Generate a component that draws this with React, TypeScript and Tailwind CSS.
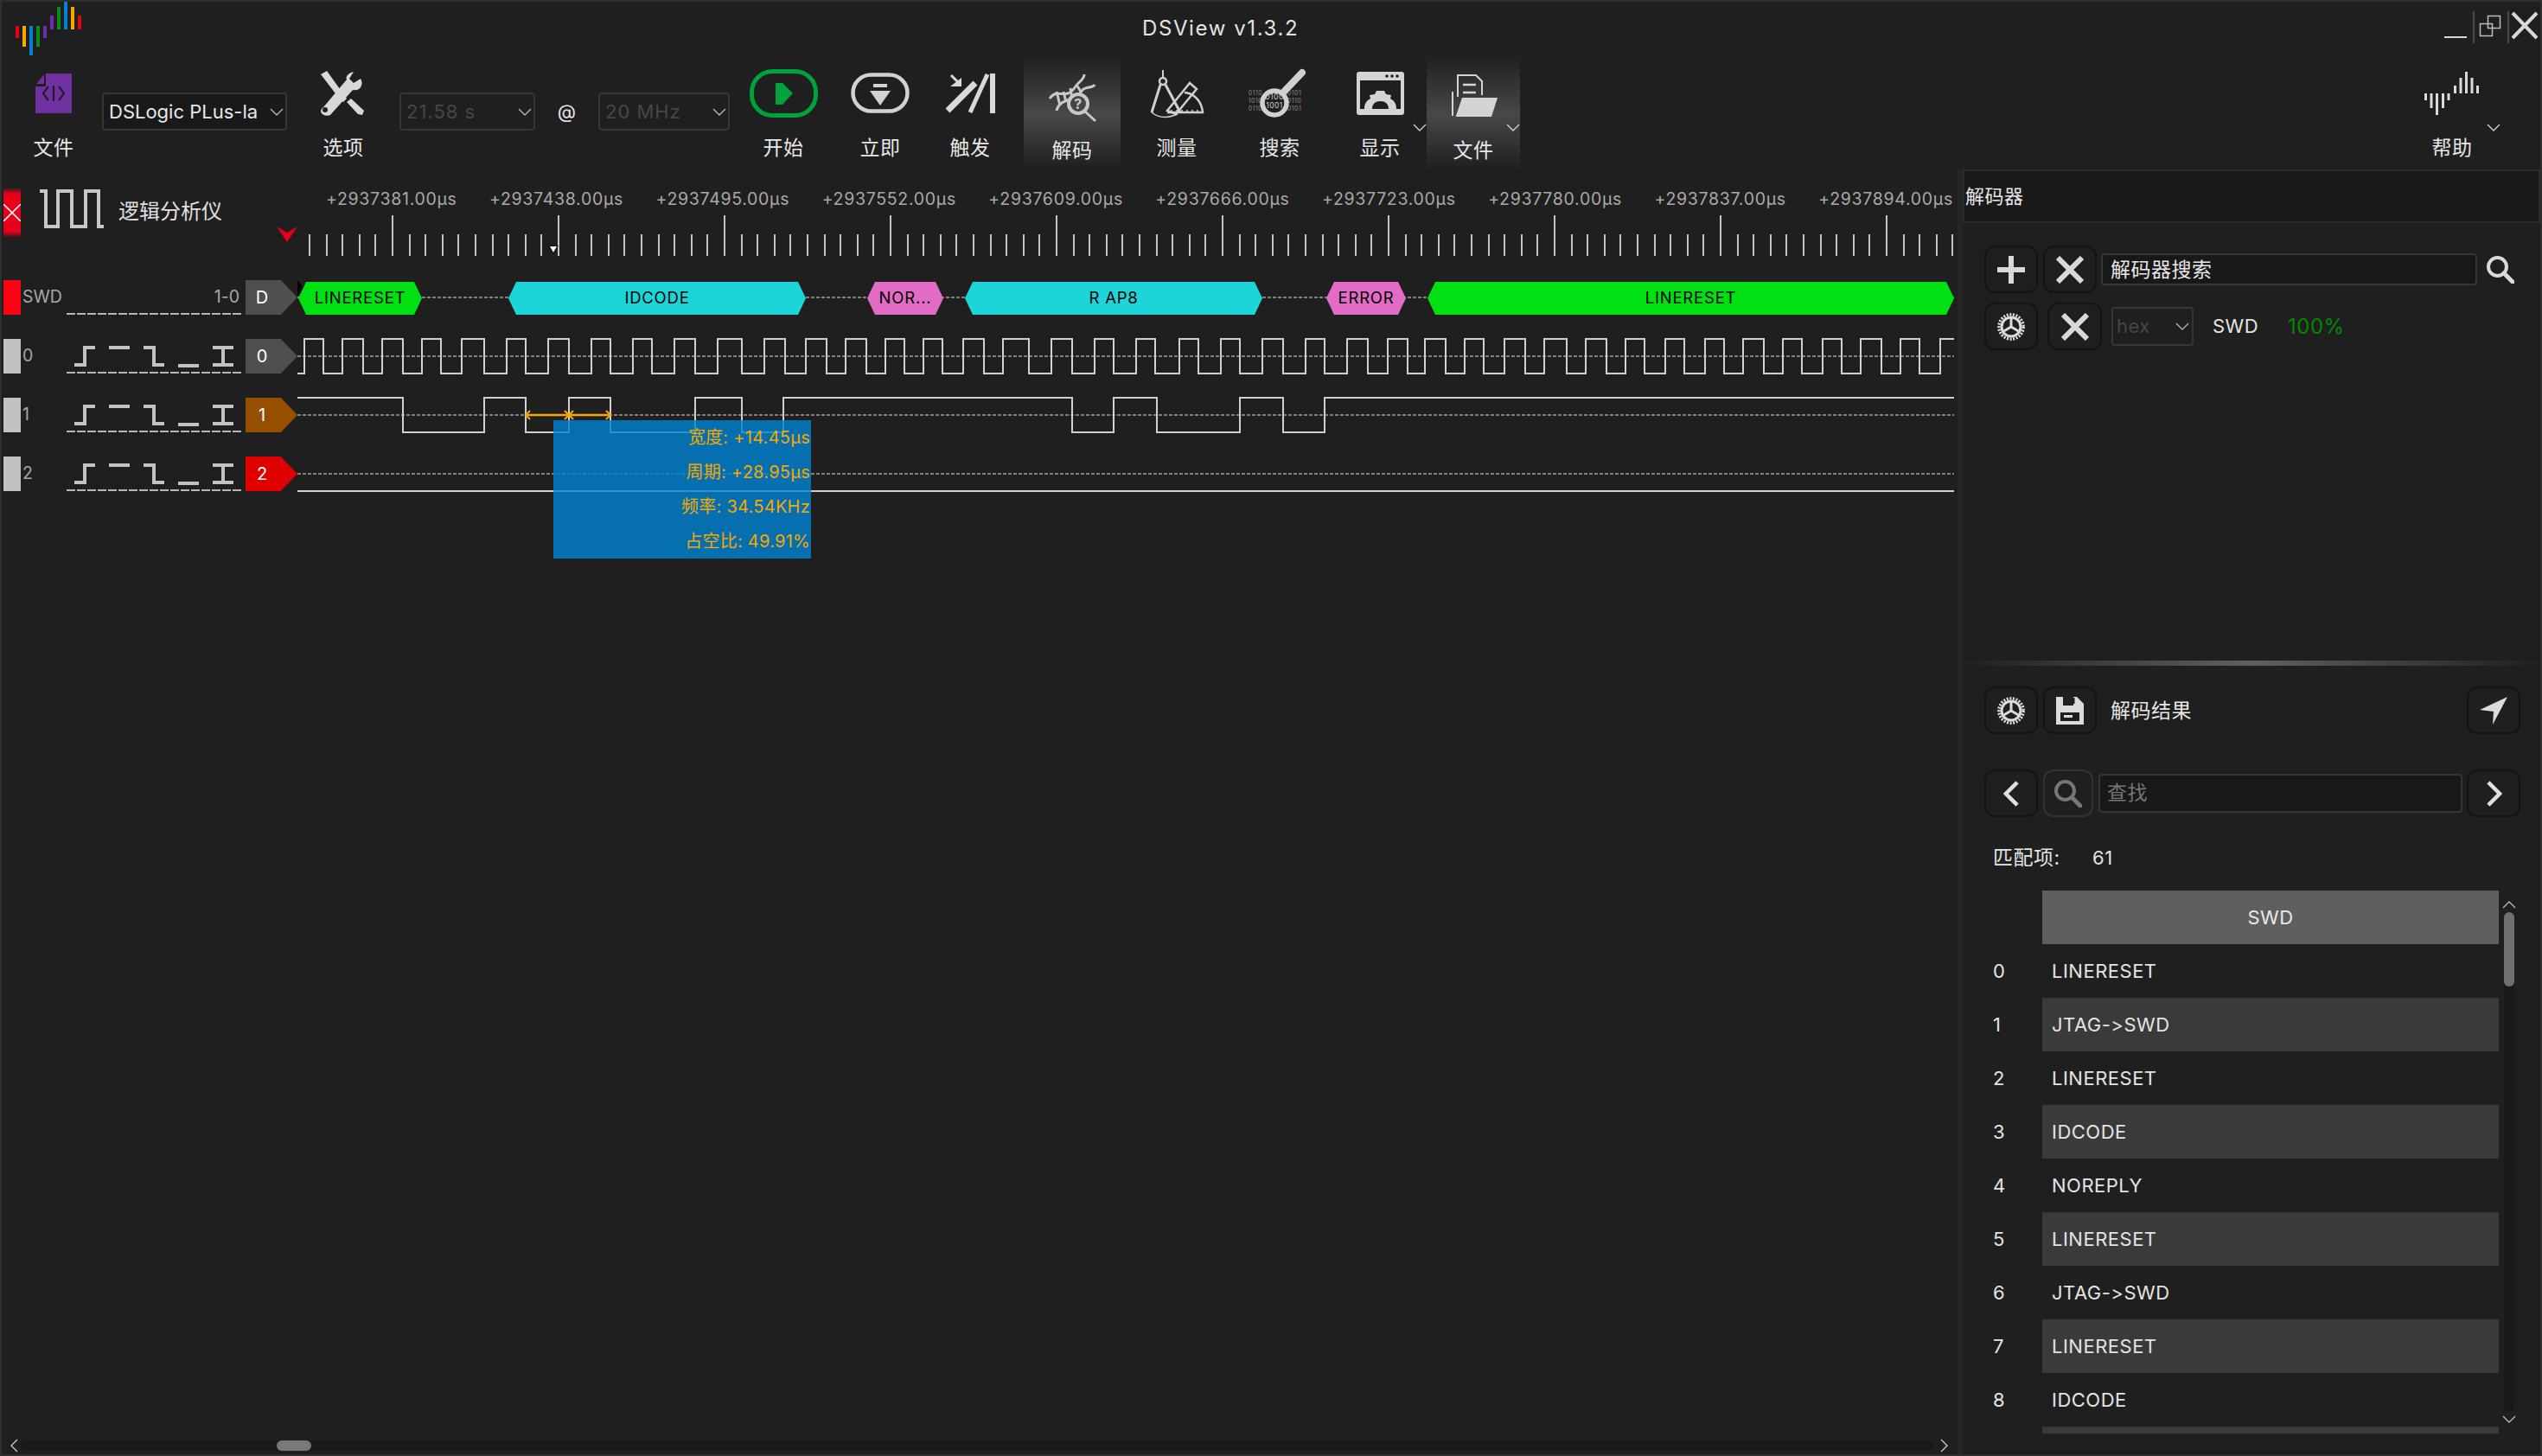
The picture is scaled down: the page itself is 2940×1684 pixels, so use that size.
import React from 'react'

const UI_FONT = "font-['Inter','Noto_Sans_CJK_SC',sans-serif]"

// clock edges in page px, starts low
const CLOCK = [352, 374, 396, 420, 442, 466, 488, 510, 534, 560, 586, 608, 634, 658, 684, 706, 732, 754, 780, 804, 830, 858, 884, 908, 932, 956, 978, 1002, 1024, 1046, 1068, 1090, 1114, 1138, 1160, 1190, 1216, 1240, 1266, 1288, 1314, 1336, 1364, 1386, 1412, 1434, 1460, 1484, 1510, 1532, 1558, 1582, 1605, 1628, 1648, 1672, 1694, 1716, 1740, 1764, 1786, 1812, 1834, 1858, 1880, 1902, 1926, 1948, 1972, 1994, 2016, 2040, 2062, 2084, 2108, 2130, 2152, 2176, 2198, 2220, 2244]
// data line, starts high
const DATA1 = [466, 560, 608, 658, 706, 804, 858, 906, 1240, 1288, 1338, 1434, 1484, 1532]

const SEGMENTS = [
    { x0: 345, x1: 488, label: 'LINERESET', color: 'bg-[#00e012]' },
    { x0: 588, x1: 932, label: 'IDCODE', color: 'bg-[#1dd5d9]' },
    { x0: 1003, x1: 1091, label: 'NOR...', color: 'bg-[#e26bc5]' },
    { x0: 1116, x1: 1460, label: 'R AP8', color: 'bg-[#1dd5d9]' },
    { x0: 1534, x1: 1626, label: 'ERROR', color: 'bg-[#e26bc5]' },
    { x0: 1651, x1: 2260, label: 'LINERESET', color: 'bg-[#00e012]' },
]

const RULER = ['+2937381.00µs', '+2937438.00µs', '+2937495.00µs', '+2937552.00µs', '+2937609.00µs', '+2937666.00µs', '+2937723.00µs', '+2937780.00µs', '+2937837.00µs', '+2937894.00µs']

const RESULTS = ['LINERESET', 'JTAG->SWD', 'LINERESET', 'IDCODE', 'NOREPLY', 'LINERESET', 'JTAG->SWD', 'LINERESET', 'IDCODE']

function wavePath(edges: number[], startHigh: boolean) {
    let high = startHigh
    let d = `M344 ${high ? 0 : 40}`
    for (const x of edges) {
        d += ` H${x} V${high ? 40 : 0}`
        high = !high
    }
    return d + ' H2260'
}

function Chev({ dir = 'down', className = '' }: { dir?: 'down' | 'up' | 'left' | 'right'; className?: string }) {
    const pts = { down: '1,1 8,8 15,1', up: '1,8 8,1 15,8', left: '8,1 1,8 8,15', right: '1,1 8,8 1,15' }[dir]
    const box = dir === 'down' || dir === 'up' ? '0 0 16 9' : '0 0 9 16'
    return (
        <svg viewBox={box} className={className} fill="none" stroke="currentColor" strokeWidth="1.4">
            <polyline points={pts} />
        </svg>
    )
}

function SearchGlyph({ className = '' }: { className?: string }) {
    return (
        <svg viewBox="0 0 32 32" className={className} fill="none" stroke="currentColor">
            <circle cx="12.5" cy="12.5" r="10.5" strokeWidth="4" />
            <line x1="20" y1="20" x2="30" y2="30" strokeWidth="5" strokeLinecap="round" />
        </svg>
    )
}

function Gear() {
    return (
        <svg viewBox="0 0 32 32" className="w-[32px] h-[32px]" fill="none" stroke="#dcdcdc">
            <circle cx="16" cy="16" r="14.2" strokeWidth="3.4" strokeDasharray="2 1.6" />
            <circle cx="16" cy="16" r="11" strokeWidth="3" />
            <path d="M16 16V6M16 16L24.5 21M16 16L7.5 21" strokeWidth="3" />
        </svg>
    )
}

function CrossGlyph() {
    return (
        <svg viewBox="0 0 32 32" className="w-[32px] h-[32px]" stroke="#d8d8d8" strokeWidth="6">
            <path d="M2 2L30 30M30 2L2 30" />
        </svg>
    )
}

function IconButton({ children, width = 'w-[62px]', border = 'border-[#141414]' }: { children: React.ReactNode; width?: string; border?: string }) {
    return <div className={`${width} h-[55px] shrink-0 flex items-center justify-center rounded-[12px] border-2 ${border}`}>{children}</div>
}

function ToolButton({ label, width, icon, active, chevron, className = '' }: { label: string; width: string; icon: React.ReactNode; active?: boolean; chevron?: string; className?: string }) {
    return (
        <div className={`relative ${width} h-full shrink-0 flex flex-col items-center pt-[16px] ${active ? 'bg-[linear-gradient(180deg,#1f1f1f,#484848_52%,#1f1f1f)]' : ''} ${className}`}>
            <div className="h-[60px]">{icon}</div>
            <div className={`${active ? 'mt-[18px]' : 'mt-[15px]'} h-[32px] text-[23px] leading-[32px] text-[#e8e8e8]`}>{label}</div>
            {chevron && <Chev className={`absolute ${chevron} top-[79px] w-[16px] h-[9px] text-[#d0d0d0]`} />}
        </div>
    )
}

function Dropdown({ text, width, dim, className = '' }: { text: string; width: string; dim?: boolean; className?: string }) {
    return (
        <div className={`${width} h-[44px] mt-[43px] shrink-0 flex items-center justify-between pl-[6px] pr-[2px] rounded-[4px] border-2 border-[#363636] overflow-hidden ${dim ? '' : 'bg-[#191919]'} ${className}`}>
            <span className={`text-[22px] whitespace-nowrap ${dim ? 'text-[#474747] tracking-[1px]' : 'text-[#e8e8e8] tracking-normal'}`}>{text}</span>
            <Chev className="w-[16px] h-[9px] shrink-0 text-[#b8b8b8]" />
        </div>
    )
}

function EdgeGlyphs() {
    return (
        <svg viewBox="86 0 184 40" className="w-[184px] h-[40px] shrink-0" fill="none" stroke="#c2c2c2" strokeWidth="4">
            <path d="M86 30H98V10H110" />
            <path d="M126 10H150" />
            <path d="M166 10H178V30H190" />
            <path d="M206 31H230" />
            <path d="M246 10H270M258 10V30M246 30H270" />
        </svg>
    )
}

function Flag({ text, color }: { text: string; color: string }) {
    return (
        <div className={`w-[60px] h-[40px] ml-[5px] shrink-0 flex items-center text-[20px] tracking-normal text-white [clip-path:polygon(0_0,68%_0,100%_50%,68%_100%,0_100%)] ${color}`}>
            <span className="w-[38px] text-center">{text}</span>
        </div>
    )
}

function ChannelRow({ box, name, flag, flagColor, glyphs, right, children }: { box: string; name: string; flag: string; flagColor: string; glyphs?: boolean; right?: string; children: React.ReactNode }) {
    return (
        <div className="flex h-[40px]">
            <div className={`w-[20px] ml-[2px] shrink-0 ${box}`} />
            <div className="relative w-[255px] shrink-0 flex items-center pl-[2px] text-[19.500px] tracking-normal text-[#a8a8a8]">
                <span className="w-[60px]">{name}</span>
                {glyphs && <EdgeGlyphs />}
                {right && <span className="ml-auto pr-[2px]">{right}</span>}
                <div className="absolute left-[53px] right-0 bottom-0 h-[2px] bg-[repeating-linear-gradient(90deg,#b8b8b8_0,#b8b8b8_10px,transparent_10px,transparent_12px)]" />
            </div>
            <Flag text={flag} color={flagColor} />
            <div className="relative w-[1916px] shrink-0">{children}</div>
        </div>
    )
}

function MidLine() {
    return (
        <svg viewBox="344 0 1916 40" className="absolute inset-0 w-[1916px] h-[40px] overflow-visible" fill="none">
            <line x1="344" y1="20" x2="2260" y2="20" stroke="#808080" strokeWidth="2" strokeDasharray="4 2" />
        </svg>
    )
}

function Wave({ d, children }: { d: string; children?: React.ReactNode }) {
    return (
        <svg viewBox="344 0 1916 40" className="absolute inset-0 w-[1916px] h-[40px] overflow-visible" fill="none">
            <path d={d} stroke="#d0d0d0" strokeWidth="2" />
            {children}
        </svg>
    )
}

function Ticks() {
    const ticks = Array.from({ length: 100 }, (_, k) => ({ x: Math.round((358 + 19.2 * k) / 2) * 2, major: k % 10 === 5 }))
    return (
        <svg viewBox="344 249 1916 47" className="w-[1916px] h-[47px] shrink-0 overflow-visible">
            {ticks.map(t => (
                <rect key={t.x} x={t.x - 1} y={t.major ? 249 : 271} width="2" height={t.major ? 47 : 25} fill="#c4c4c4" />
            ))}
            <path d="M634 284H646L640 294Z" fill="#111" />
            <path d="M636 285H644L640 292Z" fill="#fff" />
        </svg>
    )
}

function TitleBar() {
    const bars = [
        [18, 30, 14, '#e60012'], [26, 30, 24, '#f7a800'], [34, 30, 34, '#0086d1'], [42, 30, 24, '#0a8a20'], [50, 30, 14, '#6f2da8'],
        [58, 18, 16, '#6f2da8'], [66, 8, 26, '#0a8a20'], [74, 0, 34, '#0086d1'], [82, 8, 26, '#f7a800'], [90, 18, 16, '#e60012'],
    ] as const
    return (
        <div className="flex h-[62px] shrink-0">
            <svg viewBox="16 0 80 64" className="w-[80px] h-[64px] -mt-[2px] ml-[14px] shrink-0">
                {bars.map(([x, y, h, c]) => <rect key={x} x={x} y={y} width="4" height={h} fill={c} />)}
            </svg>
            <div className="ml-[1225px] h-[62px] flex items-center text-[24px] text-[#e4e4e4] tracking-[1.600px] whitespace-nowrap">DSView v1.3.2</div>
            <svg viewBox="2820 0 118 64" className="ml-auto w-[118px] h-[64px] -mt-[2px] shrink-0" fill="none" stroke="#d8d8d8">
                <line x1="2827" y1="43" x2="2853" y2="43" strokeWidth="2" />
                <line x1="2861" y1="13" x2="2861" y2="50" stroke="#4a4a4a" strokeWidth="2" />
                <rect x="2877.5" y="18.5" width="14" height="14" stroke="#bbb" strokeWidth="1.5" />
                <rect x="2868.5" y="27.5" width="14" height="14" stroke="#bbb" strokeWidth="1.5" />
                <line x1="2901" y1="13" x2="2901" y2="50" stroke="#4a4a4a" strokeWidth="2" />
                <path d="M2906 15L2934 44M2934 15L2906 44" strokeWidth="4" />
            </svg>
        </div>
    )
}

function Toolbar() {
    return (
        <div className="flex h-[132px] shrink-0">
            <ToolButton label="文件" width="w-[112px]" className="ml-[4px]" icon={
                <svg viewBox="6 80 112 60" className="w-[112px] h-[60px] overflow-visible" fill="none">
                    <path d="M53 85H83V131H41V100H53Z" fill="#7030a0" />
                    <path d="M42 97L51 86V97Z" fill="#7030a0" />
                    <path d="M56 100L50 108L56 116M68 100L74 108L68 116M62 99V117" stroke="#241a2c" strokeWidth="2.2" />
                </svg>
            } />
            <Dropdown text="DSLogic PLus-la" width="w-[214px]" />
            <ToolButton label="选项" width="w-[124px]" className="ml-[3px]" icon={
                <svg viewBox="335 80 124 60" className="w-[124px] h-[60px] overflow-visible" fill="#d8d8d8" stroke="none">
                    <path d="M371 86L378 82L401 114L397 118L394 116Z" />
                    <path d="M401 118L406 114L421 128L419 133L414 132Z" />
                    <path d="M374 124L401 92C399 88 404 84 409 83L404 91L409 96L417 91C421 97 417 106 408 104L382 133C374 136 367 129 374 124Z" />
                    <circle cx="376" cy="127" r="3" fill="#1f1f1f" />
                </svg>
            } />
            <Dropdown text="21.58 s" width="w-[157px]" dim className="ml-[3px]" />
            <div className="w-[73px] h-[44px] mt-[43px] shrink-0 flex items-center justify-center text-[22px] text-[#e8e8e8]">@</div>
            <Dropdown text="20 MHz" width="w-[152px]" dim />
            <ToolButton label="开始" width="w-[112px]" className="ml-[6px]" icon={
                <svg viewBox="850 80 112 60" className="w-[112px] h-[60px] overflow-visible" fill="none">
                    <rect x="869.5" y="82.5" width="74" height="51" rx="24" stroke="#00a23c" strokeWidth="5" />
                    <path d="M897 96H905L917 108L905 121H897Z" fill="#00a23c" />
                </svg>
            } />
            <ToolButton label="立即" width="w-[112px]" icon={
                <svg viewBox="962 80 112 60" className="w-[112px] h-[60px] overflow-visible" fill="none">
                    <rect x="986.5" y="86.5" width="63" height="42" rx="21" stroke="#d2d2d2" strokeWidth="4.5" />
                    <rect x="1010" y="97" width="16" height="4" fill="#d2d2d2" />
                    <path d="M1006 105H1030L1018 122Z" fill="#d2d2d2" />
                </svg>
            } />
            <ToolButton label="触发" width="w-[96px]" icon={
                <svg viewBox="1074 80 96 60" className="w-[96px] h-[60px] overflow-visible" fill="none" stroke="#d8d8d8">
                    <path d="M1096 128L1128 96" strokeWidth="7" />
                    <path d="M1122 130L1142 86" strokeWidth="5" />
                    <path d="M1148 85V131" strokeWidth="6" />
                    <path d="M1100 87L1110 97" strokeWidth="3" />
                    <path d="M1112 90V100H1099Z" fill="#d8d8d8" stroke="none" />
                </svg>
            } />
            <ToolButton label="解码" width="w-[112px]" active className="ml-[14px]" icon={
                <svg viewBox="1184 80 112 60" className="w-[112px] h-[60px] overflow-visible" fill="none" stroke="#c8c8c8">
                    <path d="M1214 114C1224 100 1232 118 1244 100C1250 92 1254 92 1254 86" strokeWidth="3" />
                    <path d="M1222 128C1226 112 1242 120 1252 104C1256 100 1264 102 1266 98" strokeWidth="3" />
                    <path d="M1222 106L1226 122M1230 106L1233 118M1238 102L1240 114M1245 98L1250 106" strokeWidth="3" />
                    <circle cx="1247" cy="120" r="11" strokeWidth="4" fill="#444" />
                    <path d="M1255 129L1267 140" strokeWidth="3" />
                    <text x="1247" y="126" textAnchor="middle" fontSize="16" fontWeight="700" fill="#c8c8c8" stroke="none">?</text>
                </svg>
            } />
            <ToolButton label="测量" width="w-[112px]" className="ml-[9px]" icon={
                <svg viewBox="1305 80 112 60" className="w-[112px] h-[60px] overflow-visible" fill="none" stroke="#d0d0d0">
                    <path d="M1345 81V90" strokeWidth="2" />
                    <circle cx="1345" cy="94" r="4" strokeWidth="2.5" />
                    <path d="M1342 98L1332 130M1348 98L1365 130" strokeWidth="3" />
                    <path d="M1332 130C1342 138 1352 136 1362 132" strokeWidth="1.5" />
                    <path d="M1350 128L1376 96L1384 103L1360 132Z" strokeWidth="2.5" />
                    <path d="M1350 130H1391C1390 118 1382 108 1370 107" strokeWidth="2.5" />
                    <path d="M1355 130V127M1361 130V127M1367 130V127M1373 130V127M1379 130V127M1385 130V127" strokeWidth="1.5" />
                </svg>
            } />
            <ToolButton label="搜索" width="w-[112px]" className="ml-[7px]" icon={
                <svg viewBox="1424 80 112 60" className="w-[112px] h-[60px] overflow-visible" fill="none" stroke="#d0d0d0">
                    <g fontSize="7" fill="#8a8a8a" stroke="none" textAnchor="middle">
                        <text x="1452" y="110">0110</text>
                        <text x="1452" y="119">1010</text>
                        <text x="1452" y="128">0110</text>
                        <text x="1497" y="110">0101</text>
                        <text x="1497" y="119">0110</text>
                        <text x="1497" y="128">0101</text>
                    </g>
                    <g fontSize="8.500" fill="#d0d0d0" stroke="none" textAnchor="middle">
                        <text x="1474" y="115">0100</text>
                        <text x="1474" y="125">1001</text>
                    </g>
                    <circle cx="1474" cy="119" r="14" strokeWidth="5.5" />
                    <path d="M1484 107L1506 84" strokeWidth="8" strokeLinecap="round" />
                </svg>
            } />
            <ToolButton label="显示" width="w-[108px]" className="ml-[6px]" chevron="left-[92px]" icon={
                <svg viewBox="1542 80 108 60" className="w-[108px] h-[60px] overflow-visible">
                    <rect x="1569" y="83" width="55" height="50" rx="3" fill="#d4d4d4" />
                    <rect x="1573" y="93" width="47" height="33" fill="#1f1f1f" />
                    <circle cx="1604" cy="88" r="1.8" fill="#1f1f1f" />
                    <circle cx="1610" cy="88" r="1.8" fill="#1f1f1f" />
                    <circle cx="1616" cy="88" r="1.8" fill="#1f1f1f" />
                    <path d="M1578 126C1578 118 1582 116 1585 114L1584 110L1590 109L1592 105H1601L1603 109L1609 110L1608 114C1611 116 1615 118 1615 126H1606C1606 120 1602 117 1596.500 117C1591 117 1587 120 1587 126Z" fill="#d4d4d4" />
                </svg>
            } />
            <ToolButton label="文件" width="w-[108px]" active chevron="left-[92px]" icon={
                <svg viewBox="1650 80 108 60" className="w-[108px] h-[60px] overflow-visible" fill="none">
                    <path d="M1686 112V87H1707L1714 94V110" stroke="#d4d4d4" strokeWidth="2" />
                    <path d="M1692 98H1707M1692 107H1707" stroke="#d4d4d4" strokeWidth="2.500" />
                    <path d="M1680 106V134" stroke="#d4d4d4" strokeWidth="2" />
                    <path d="M1684 134L1691 113H1732L1725 135H1684Z" fill="#d4d4d4" />
                </svg>
            } />
            <ToolButton label="帮助" width="w-[112px]" className="ml-auto mr-[46px]" chevron="left-[96px]" icon={
                <svg viewBox="2780 80 112 60" className="w-[112px] h-[60px] overflow-visible" fill="#dadada">
                    <rect x="2804" y="108" width="3" height="8" />
                    <rect x="2810.500" y="108" width="3" height="17" />
                    <rect x="2817" y="108" width="3" height="25" />
                    <rect x="2824" y="108" width="3" height="17" />
                    <rect x="2830.500" y="108" width="3" height="8" />
                    <rect x="2838" y="99" width="3" height="9" />
                    <rect x="2844.500" y="90" width="3" height="18" />
                    <rect x="2851" y="83" width="3" height="25" />
                    <rect x="2857.500" y="90" width="3" height="18" />
                    <rect x="2864" y="99" width="3" height="9" />
                </svg>
            } />
        </div>
    )
}

function RulerRow() {
    return (
        <div className="flex h-[128px] shrink-0">
            <div className="relative w-[342px] shrink-0 flex items-start">
                <div className="mt-[21px] ml-[2px] w-[20px] h-[58px] shrink-0 bg-[linear-gradient(180deg,#1f1f1f,#e60019_12%,#e60019_88%,#1f1f1f)] flex items-center justify-center">
                    <svg viewBox="0 0 20 20" className="w-[20px] h-[20px]" stroke="#eee" strokeWidth="1.600"><path d="M0 0L20 20M20 0L0 20" /></svg>
                </div>
                <svg viewBox="46 219 74 45" className="mt-[23px] ml-[22px] w-[74px] h-[45px] shrink-0 overflow-visible" fill="none">
                    <path d="M46 221H53V262H67V221H83V262H99V221H114V262H120" stroke="#c8c8c8" strokeWidth="4" />
                </svg>
                <div className="mt-[33px] ml-[17px] text-[24px] leading-[32px] tracking-normal text-[#e0e0e0] whitespace-nowrap">逻辑分析仪</div>
                <svg viewBox="320 262 24 18" className="absolute left-[318px] top-[66px] w-[24px] h-[18px]">
                    <path d="M320 262L332 269L344 262L332 280Z" fill="#e60019" />
                </svg>
            </div>
            <div className="flex flex-col">
                <div className="h-[28px] mt-[20px] pl-[33px] pr-[1px] flex justify-between text-[19.500px] leading-[28px] tracking-[0.7px] text-[#a9a9a9]">
                    {RULER.map(t => <span key={t}>{t}</span>)}
                </div>
                <div className="mt-[5px]"><Ticks /></div>
            </div>
        </div>
    )
}

function DecodedSegments() {
    return (
        <>
            {SEGMENTS.map(s => (
                <div
                    key={s.x0}
                    className={`absolute top-[2px] h-[38px] flex items-center justify-center text-[18.500px] tracking-[0.8px] text-black [clip-path:polygon(9px_0,calc(100%-9px)_0,100%_50%,calc(100%-9px)_100%,9px_100%,0_50%)] ${s.color}`}
                    style={{ left: s.x0 - 344, width: s.x1 - s.x0 }}
                >
                    {s.label}
                </div>
            ))}
        </>
    )
}

function Measure() {
    return (
        <g stroke="#f5a800" fill="none">
            <path d="M608 20H706" strokeWidth="2.500" />
            <path d="M613 15L608 20L613 25M701 15L706 20L701 25M653 15L663 25M663 15L653 25" strokeWidth="2" />
        </g>
    )
}

function Channels() {
    return (
        <div className="flex flex-col gap-[28px]">
            <ChannelRow box="bg-[#ff0014]" name="SWD" flag="D" flagColor="bg-[#4f4f4f]" right="1-0">
                <MidLine />
                <svg viewBox="344 0 8 18" className="absolute left-0 top-0 w-[8px] h-[18px]"><path d="M344 0L351 9L344 18Z" fill="#000" /></svg>
                <DecodedSegments />
            </ChannelRow>
            <ChannelRow box="bg-[#c2c2c2]" name="0" flag="0" flagColor="bg-[#4f4f4f]" glyphs>
                <MidLine />
                <Wave d={wavePath(CLOCK, false)} />
            </ChannelRow>
            <ChannelRow box="bg-[#c2c2c2]" name="1" flag="1" flagColor="bg-[#964f00]" glyphs>
                <MidLine />
                <Wave d={wavePath(DATA1, true)}><Measure /></Wave>
            </ChannelRow>
            <ChannelRow box="bg-[#c2c2c2]" name="2" flag="2" flagColor="bg-[#df0000]" glyphs>
                <MidLine />
                <Wave d="M344 40H2260" />
            </ChannelRow>
        </div>
    )
}

function CursorTip() {
    const lines = ['宽度: +14.45µs', '周期: +28.95µs', '频率: 34.54KHz', '占空比: 49.91%']
    return (
        <div className="absolute left-[638px] top-[290px] w-[298px] h-[160px] bg-[#0082d1d0] flex flex-col">
            {lines.map(l => (
                <div key={l} className="h-[40px] flex items-center justify-end pr-[1px] text-[20px] tracking-[0.25px] text-[#f5a800] whitespace-nowrap">{l}</div>
            ))}
        </div>
    )
}

function HScroll() {
    return (
        <div className="flex items-center h-[18px] mb-[1px] shrink-0">
            <Chev dir="left" className="ml-[10px] w-[9px] h-[18px] text-[#c8c8c8] shrink-0" />
            <div className="ml-[3px] w-[2213px] h-[12px] rounded-full bg-[#191919] shrink-0">
                <div className="ml-[296px] w-[40px] h-[12px] rounded-full bg-[#787878]" />
            </div>
            <Chev dir="right" className="ml-[7px] w-[9px] h-[18px] text-[#c8c8c8] shrink-0" />
        </div>
    )
}

function DecoderPanel() {
    return (
        <div className="flex-1 flex flex-col min-w-0">
            <div className="h-[62px] shrink-0 flex items-center pl-[1px] border-2 border-[#2b2b2b] bg-[#191919] text-[22px] text-[#e8e8e8]">解码器</div>

            <div className="h-[506px] shrink-0 pl-[25px] pt-[26px]">
                <div className="flex items-center h-[55px]">
                    <IconButton>
                        <svg viewBox="0 0 32 32" className="w-[32px] h-[32px]" stroke="#d8d8d8" strokeWidth="6"><path d="M16 0V32M0 16H32" /></svg>
                    </IconButton>
                    <div className="ml-[6px]"><IconButton><CrossGlyph /></IconButton></div>
                    <div className="ml-[5px] w-[435px] h-[37px] flex items-center pl-[9px] pt-[2px] rounded-[4px] border-2 border-[#363636] bg-[#181818] text-[23px] text-[#e8e8e8]">解码器搜索</div>
                    <SearchGlyph className="ml-[11px] w-[32px] h-[32px] text-[#dadada]" />
                </div>
                <div className="flex items-center h-[55px] mt-[11px]">
                    <IconButton><Gear /></IconButton>
                    <div className="ml-[11px]"><IconButton width="w-[63px]"><CrossGlyph /></IconButton></div>
                    <div className="ml-[11px] w-[95px] h-[45px] flex items-center justify-between pl-[4px] pr-[3px] rounded-[4px] border-2 border-[#363636]">
                        <span className="text-[22px] text-[#474747]">hex</span>
                        <Chev className="w-[16px] h-[9px] text-[#b0b0b0]" />
                    </div>
                    <span className="ml-[22px] w-[87px] text-[22px] text-[#e4e4e4]">SWD</span>
                    <span className="text-[24px] text-[#008a00]">100%</span>
                </div>
            </div>

            <div className="h-[6px] shrink-0 bg-[linear-gradient(90deg,#1f1f1f,#606060_50%,#1f1f1f)]" />

            <div className="pl-[25px] pt-[24px] flex flex-col">
                <div className="flex items-center h-[55px]">
                    <IconButton><Gear /></IconButton>
                    <div className="ml-[6px]">
                        <IconButton>
                            <svg viewBox="0 0 32 32" className="w-[32px] h-[32px]">
                                <path d="M0 0H8V10H20V0H24L32 8V32H0Z" fill="#dcdcdc" />
                                <rect x="18" y="1" width="3.500" height="7" fill="#1f1f1f" />
                                <rect x="5" y="18" width="22" height="10" fill="#1f1f1f" />
                                <rect x="9" y="21" width="10" height="3" fill="#dcdcdc" />
                            </svg>
                        </IconButton>
                    </div>
                    <div className="ml-[16px] pt-[2px] text-[23px] text-[#e8e8e8]">解码结果</div>
                    <div className="ml-auto mr-[23px]">
                        <IconButton>
                            <svg viewBox="0 0 32 32" className="w-[32px] h-[32px]"><path d="M32 0L0 15L16 17L15 32Z" fill="#dcdcdc" /></svg>
                        </IconButton>
                    </div>
                </div>

                <div className="flex items-center h-[55px] mt-[41px]">
                    <IconButton><Chev dir="left" className="w-[19px] h-[30px] text-[#e0e0e0] [&_polyline]:[stroke-width:2.400]" /></IconButton>
                    <div className="ml-[6px]"><IconButton width="w-[58px]" border="border-[#333]"><SearchGlyph className="w-[32px] h-[32px] text-[#777]" /></IconButton></div>
                    <div className="ml-[6px] w-[421px] h-[45px] flex items-center pl-[8px] rounded-[4px] border-2 border-[#363636] bg-[#181818] text-[23px] text-[#757575]">查找</div>
                    <div className="ml-[5px]"><IconButton><Chev dir="right" className="w-[19px] h-[30px] text-[#e0e0e0] [&_polyline]:[stroke-width:2.400]" /></IconButton></div>
                </div>

                <div className="flex items-center h-[28px] mt-[33px] pl-[10px] text-[#e4e4e4]">
                    <span className="w-[115px] text-[23px]">匹配项:</span>
                    <span className="text-[22px]">61</span>
                </div>

                <div className="flex mt-[24px] pl-[10px]">
                    <div className="h-[628px] overflow-hidden shrink-0">
                        <div className="flex">
                            <div className="w-[57px] shrink-0" />
                            <div className="w-[528px] h-[62px] flex items-center justify-center bg-[#5f5f5f] text-[22px] text-[#e8e8e8]">SWD</div>
                        </div>
                        {RESULTS.map((r, i) => (
                            <div key={i} className="flex h-[62px] text-[22px] text-[#e4e4e4]">
                                <div className="w-[57px] shrink-0 flex items-center">{i}</div>
                                <div className={`w-[528px] flex items-center pl-[11px] ${i % 2 === 1 ? 'bg-[#3a3a3a]' : ''}`}>{r}</div>
                            </div>
                        ))}
                        {/* next row is scrolled out, only its top edge shows */}
                        <div className="ml-[57px] w-[528px] h-[62px] bg-[#3a3a3a]" />
                    </div>
                    <div className="ml-[3px] w-[18px] pt-[12px] flex flex-col items-center shrink-0">
                        <Chev dir="up" className="w-[18px] h-[9px] text-[#b8b8b8]" />
                        <div className="mt-[4px] w-[12px] h-[578px] rounded-full bg-[#191919]">
                            <div className="w-[12px] h-[86px] rounded-full bg-[#707070]" />
                        </div>
                        <Chev className="mt-[4px] w-[18px] h-[9px] text-[#b8b8b8]" />
                    </div>
                </div>
            </div>
        </div>
    )
}

export default function App() {
    return (
        <div className={`w-[2940px] h-[1684px] flex flex-col overflow-hidden border-2 border-[#2e2e2e] bg-[#1f1f1f] tracking-[0.5px] [font-variant-ligatures:no-contextual] ${UI_FONT}`}>
            <TitleBar />
            <Toolbar />
            <div className="flex flex-1 min-h-0">
                <div className="relative w-[2262px] shrink-0 flex flex-col">
                    <RulerRow />
                    <Channels />
                    <CursorTip />
                    <div className="flex-1" />
                    <HScroll />
                </div>
                <div className="w-[6px] shrink-0 bg-[#252525]" />
                <DecoderPanel />
            </div>
        </div>
    )
}
